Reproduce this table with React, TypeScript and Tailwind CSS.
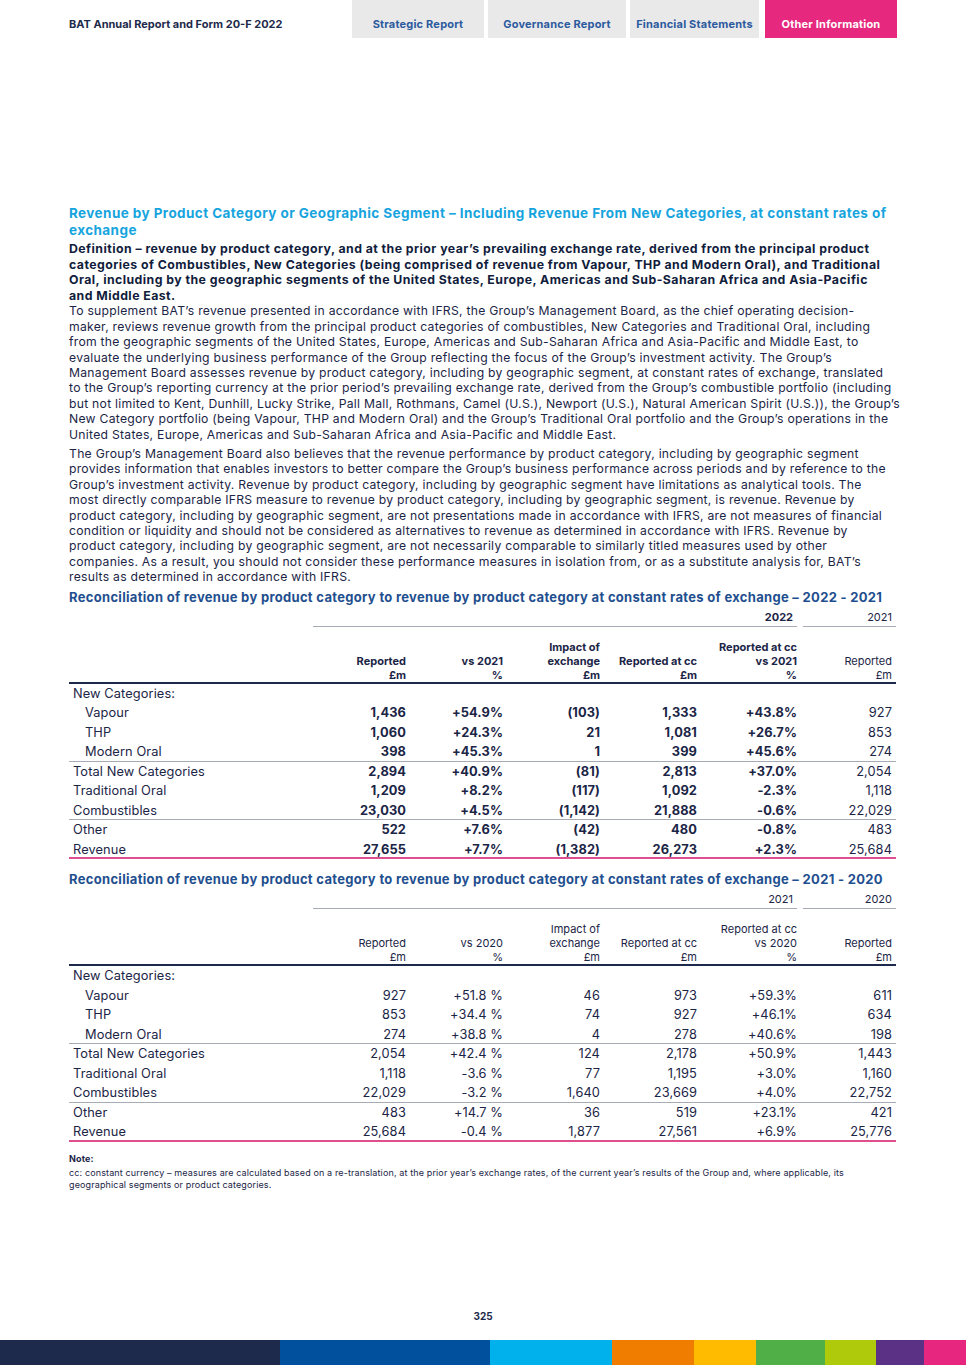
import React from 'react';

type Row = {
  label: string;
  sub?: boolean;
  values?: string[];
  line?: 'gray' | 'pink';
};

const tabs = [
  { name: 'Strategic Report', w: 'w-[132px]' },
  { name: 'Governance Report', w: 'w-[138px]' },
  { name: 'Financial Statements', w: 'w-[129px]' },
];

const definition = [
  'Definition – revenue by product category, and at the prior year’s prevailing exchange rate, derived from the principal product',
  'categories of Combustibles, New Categories (being comprised of revenue from Vapour, THP and Modern Oral), and Traditional',
  'Oral, including by the geographic segments of the United States, Europe, Americas and Sub-Saharan Africa and Asia-Pacific',
  'and Middle East.',
];

const para1 = [
  'To supplement BAT’s revenue presented in accordance with IFRS, the Group’s Management Board, as the chief operating decision-',
  'maker, reviews revenue growth from the principal product categories of combustibles, New Categories and Traditional Oral, including',
  'from the geographic segments of the United States, Europe, Americas and Sub-Saharan Africa and Asia-Pacific and Middle East, to',
  'evaluate the underlying business performance of the Group reflecting the focus of the Group’s investment activity. The Group’s',
  'Management Board assesses revenue by product category, including by geographic segment, at constant rates of exchange, translated',
  'to the Group’s reporting currency at the prior period’s prevailing exchange rate, derived from the Group’s combustible portfolio (including',
  'but not limited to Kent, Dunhill, Lucky Strike, Pall Mall, Rothmans, Camel (U.S.), Newport (U.S.), Natural American Spirit (U.S.)), the Group’s',
  'New Category portfolio (being Vapour, THP and Modern Oral) and the Group’s Traditional Oral portfolio and the Group’s operations in the',
  'United States, Europe, Americas and Sub-Saharan Africa and Asia-Pacific and Middle East.',
];

const para2 = [
  'The Group’s Management Board also believes that the revenue performance by product category, including by geographic segment',
  'provides information that enables investors to better compare the Group’s business performance across periods and by reference to the',
  'Group’s investment activity. Revenue by product category, including by geographic segment have limitations as analytical tools. The',
  'most directly comparable IFRS measure to revenue by product category, including by geographic segment, is revenue. Revenue by',
  'product category, including by geographic segment, are not presentations made in accordance with IFRS, are not measures of financial',
  'condition or liquidity and should not be considered as alternatives to revenue as determined in accordance with IFRS. Revenue by',
  'product category, including by geographic segment, are not necessarily comparable to similarly titled measures used by other',
  'companies. As a result, you should not consider these performance measures in isolation from, or as a substitute analysis for, BAT’s',
  'results as determined in accordance with IFRS.',
];

const rows2022: Row[] = [
  { label: 'New Categories:' },
  { label: 'Vapour', sub: true, values: ['1,436', '+54.9%', '(103)', '1,333', '+43.8%', '927'] },
  { label: 'THP', sub: true, values: ['1,060', '+24.3%', '21', '1,081', '+26.7%', '853'] },
  { label: 'Modern Oral', sub: true, values: ['398', '+45.3%', '1', '399', '+45.6%', '274'], line: 'gray' },
  { label: 'Total New Categories', values: ['2,894', '+40.9%', '(81)', '2,813', '+37.0%', '2,054'] },
  { label: 'Traditional Oral', values: ['1,209', '+8.2%', '(117)', '1,092', '-2.3%', '1,118'] },
  { label: 'Combustibles', values: ['23,030', '+4.5%', '(1,142)', '21,888', '-0.6%', '22,029'], line: 'gray' },
  { label: 'Other', values: ['522', '+7.6%', '(42)', '480', '-0.8%', '483'] },
  { label: 'Revenue', values: ['27,655', '+7.7%', '(1,382)', '26,273', '+2.3%', '25,684'], line: 'pink' },
];

const rows2021: Row[] = [
  { label: 'New Categories:' },
  { label: 'Vapour', sub: true, values: ['927', '+51.8 %', '46', '973', '+59.3%', '611'] },
  { label: 'THP', sub: true, values: ['853', '+34.4 %', '74', '927', '+46.1%', '634'] },
  { label: 'Modern Oral', sub: true, values: ['274', '+38.8 %', '4', '278', '+40.6%', '198'], line: 'gray' },
  { label: 'Total New Categories', values: ['2,054', '+42.4 %', '124', '2,178', '+50.9%', '1,443'] },
  { label: 'Traditional Oral', values: ['1,118', '-3.6 %', '77', '1,195', '+3.0%', '1,160'] },
  { label: 'Combustibles', values: ['22,029', '-3.2 %', '1,640', '23,669', '+4.0%', '22,752'], line: 'gray' },
  { label: 'Other', values: ['483', '+14.7 %', '36', '519', '+23.1%', '421'] },
  { label: 'Revenue', values: ['25,684', '-0.4 %', '1,877', '27,561', '+6.9%', '25,776'], line: 'pink' },
];

const colours = [
  'w-[280px] bg-[#1d2a4b]',
  'w-[210px] bg-[#00509e]',
  'w-[122px] bg-[#00b1eb]',
  'w-[82px] bg-[#f07d00]',
  'w-[62px] bg-[#ffbb00]',
  'w-[69px] bg-[#50af47]',
  'w-[51px] bg-[#afca0b]',
  'w-[48px] bg-[#5a3184]',
  'flex-1 bg-[#e7277f]',
];

const grid = 'grid grid-cols-[244px_97px_97px_97px_97px_100px_95px]';

type TableProps = {
  title: string;
  year: string;
  prevYear: string;
  vs: string;
  rows: Row[];
  bold?: boolean;
};

const RevenueTable: React.FC<TableProps> = ({ title, year, prevYear, vs, rows, bold }) => {
  const strong = bold ? 'font-bold' : 'font-normal';
  const headers = [
    ['Reported', '£m'],
    [`vs ${vs}`, '%'],
    ['Impact of', 'exchange', '£m'],
    ['Reported at cc', '£m'],
    ['Reported at cc', `vs ${vs}`, '%'],
  ];

  return (
    <div className="w-[827px]">
      <h3 className="text-[13px] leading-4 font-bold tracking-[0.31px] text-[#1f4f8f] whitespace-nowrap">{title}</h3>
      <div className={`${grid} mt-1 text-[11px] leading-[17px]`}>
        <div />
        <div className={`col-span-5 mr-1 border-b border-[#a7abb6] pr-1 text-right ${strong}`}>{year}</div>
        <div className="ml-[2px] border-b border-[#a7abb6] pr-1 text-right">{prevYear}</div>
      </div>
      <div className={`${grid} mt-[13px] border-b-2 border-[#1d2a4b] text-[11px] leading-[14px]`}>
        <div />
        {headers.map((h, i) => (
          <div key={i} className={`flex flex-col justify-end pr-1 text-right ${strong}`}>
            {h.map((t) => (
              <span key={t}>{t}</span>
            ))}
          </div>
        ))}
        <div className="flex flex-col justify-end pr-1 text-right">
          <span>Reported</span>
          <span>£m</span>
        </div>
      </div>
      {rows.map((r) => (
        <div
          key={r.label}
          className={`${grid} h-[19.5px] items-center text-[12.8px] tracking-[0.1px] ${
            r.line === 'gray' ? 'border-b border-[#a7abb6]' : r.line === 'pink' ? 'border-b-2 border-[#df4f8f]' : ''
          }`}
        >
          <div className={r.sub ? 'pl-4' : 'pl-1'}>{r.label}</div>
          {r.values?.map((v, i) => (
            <div key={i} className={`pr-1 text-right ${i < 5 ? strong : 'font-normal'}`}>
              {v}
            </div>
          ))}
        </div>
      ))}
    </div>
  );
};

const App: React.FC = () => {
  return (
    <div className="flex min-h-[1365px] w-[966px] flex-col bg-white font-['Inter',sans-serif] text-[#1b2546]">
      <header className="flex h-[38px] items-stretch">
        <div className="w-[352px] pl-[69px] pt-4 text-[11px] font-bold text-[#1d2a4b]">BAT Annual Report and Form 20-F 2022</div>
        <nav className="flex gap-1">
          {tabs.map((t) => (
            <div key={t.name} className={`${t.w} bg-[#e9e9ea] pt-4 text-center text-[11px] font-bold tracking-[0.2px] text-[#2c5a9e]`}>
              {t.name}
            </div>
          ))}
          <div className="ml-[2px] w-[132px] bg-[#e6287f] pt-4 text-center text-[11px] font-bold tracking-[0.2px] text-white">Other Information</div>
        </nav>
      </header>

      <main className="mt-[167px] pl-[69px]">
        <h2 className="text-[13.5px] leading-[17px] font-bold tracking-[0.42px] text-[#16a4de] whitespace-nowrap">
          Revenue by Product Category or Geographic Segment – Including Revenue From New Categories, at constant rates of
          <br />
          exchange
        </h2>
        <div className="mt-[2px] text-[12.3px] leading-[15.6px] font-bold tracking-[0.45px] text-[#111d3c]">
          {definition.map((l) => (
            <div key={l} className="whitespace-nowrap">{l}</div>
          ))}
        </div>
        <div className="text-[12.2px] leading-[15.4px] tracking-[0.26px]">
          {para1.map((l) => (
            <div key={l} className="whitespace-nowrap">{l}</div>
          ))}
        </div>
        <div className="mt-1 text-[12.2px] leading-[15.4px] tracking-[0.26px]">
          {para2.map((l) => (
            <div key={l} className="whitespace-nowrap">{l}</div>
          ))}
        </div>

        <div className="mt-[4px]">
          <RevenueTable
            title="Reconciliation of revenue by product category to revenue by product category at constant rates of exchange – 2022 - 2021"
            year="2022"
            prevYear="2021"
            vs="2021"
            rows={rows2022}
            bold
          />
        </div>
        <div className="mt-[12px]">
          <RevenueTable
            title="Reconciliation of revenue by product category to revenue by product category at constant rates of exchange – 2021 - 2020"
            year="2021"
            prevYear="2020"
            vs="2020"
            rows={rows2021}
          />
        </div>

        <div className="mt-[11px] text-[9px] leading-3 tracking-[0.13px]">
          <div className="font-bold">Note:</div>
          <div className="mt-[2px] whitespace-nowrap">
            cc: constant currency – measures are calculated based on a re-translation, at the prior year’s exchange rates, of the current year’s results of the Group and, where applicable, its
            <br />
            geographical segments or product categories.
          </div>
        </div>
      </main>

      <div className="flex-1" />
      <div className="mb-[17px] text-center text-[10px] leading-[14px] font-bold text-[#1d2a4b]">325</div>
      <div className="flex h-[25px]">
        {colours.map((c) => (
          <div key={c} className={c} />
        ))}
      </div>
    </div>
  );
};

export default App;
